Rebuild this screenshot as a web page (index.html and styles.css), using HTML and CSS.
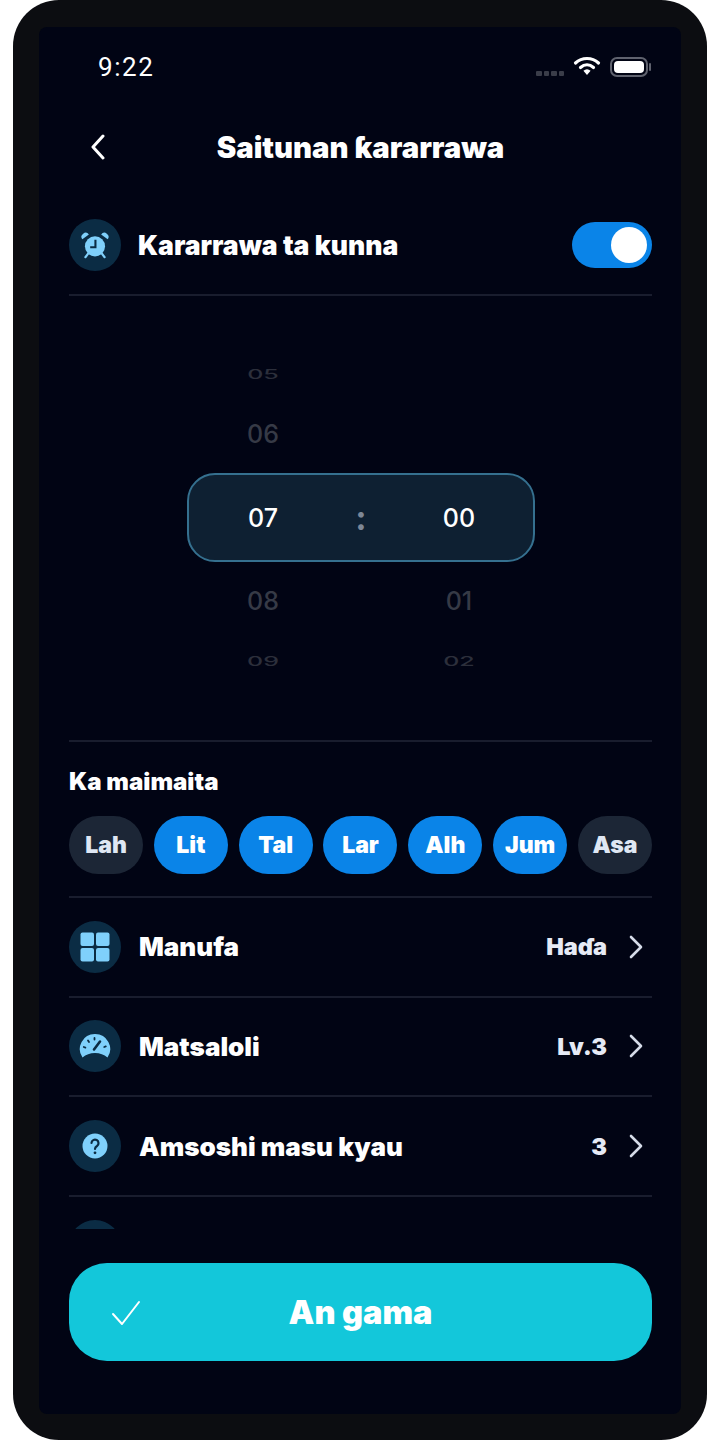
FILE: index.html
```html
<!DOCTYPE html>
<html lang="ha">
<head>
    <meta charset="UTF-8">
    <meta name="viewport" content="width=device-width, initial-scale=1.0">
    <title>Saitunan ƙararrawa</title>
    <link rel="stylesheet" href="styles.css">
</head>
<body>
    <div class="phone">
        <div class="screen">
            <!-- Status bar -->
            <div class="status-bar">
                <span class="status-time">9:22</span>
                <div class="status-icons">
                    <div class="signal"><i></i><i></i><i></i><i></i></div>
                    <svg class="wifi" width="28" height="22" viewBox="0 0 28 22" fill="none" stroke="#fff" stroke-width="3.2" stroke-linecap="round">
                        <path d="M2.5 8C9 2 19 2 25.500 8"/>
                        <path d="M7.500 12.500C11.500 9 16.500 9 20.500 12.500"/>
                        <path d="M14 20l-3.600-4.200a5.500 5.500 0 0 1 7.200 0z" fill="#fff" stroke="none"/>
                    </svg>
                    <div class="battery"><div class="battery-fill"></div></div>
                </div>
            </div>

            <!-- Header -->
            <header class="header">
                <svg class="back" width="16" height="26" viewBox="0 0 16 26" fill="none" stroke="#fff" stroke-width="3" stroke-linecap="round" stroke-linejoin="round">
                    <path d="M13 2L3 13l10 11"/>
                </svg>
                <h1>Saitunan ƙararrawa</h1>
            </header>

            <main class="content">
                <div class="alarm-row">
                    <div class="icon-circle">
                        <svg width="28" height="28" viewBox="0 0 32 32" fill="#7fd0fb">
                            <circle cx="16" cy="17.500" r="11.500"/>
                            <path d="M1.500 9.500a4.500 4.500 0 0 1 7.500-5.500z"/>
                            <path d="M30.500 9.500a4.500 4.500 0 0 0-7.500-5.500z"/>
                            <path d="M8 26l-3 4M24 26l3 4" stroke="#7fd0fb" stroke-width="2.400" stroke-linecap="round"/>
                            <path d="M16.500 10v8.500H10.500" fill="none" stroke="#0b2c44" stroke-width="2.400"/>
                        </svg>
                    </div>
                    <span class="row-title alarm-title">Kararrawa ta kunna</span>
                    <div class="toggle"><div class="toggle-knob"></div></div>
                </div>

                <!-- Time wheel -->
                <div class="picker">
                    <div class="wheel-row far"><span>05</span><span></span><span></span></div>
                    <div class="wheel-row near"><span>06</span><span></span><span></span></div>
                    <div class="wheel-row selected"><span>07</span><span class="colon">:</span><span>00</span></div>
                    <div class="wheel-row near"><span>08</span><span></span><span>01</span></div>
                    <div class="wheel-row far"><span>09</span><span></span><span>02</span></div>
                </div>

                <!-- Repeat days -->
                <section class="repeat">
                    <h2>Ka maimaita</h2>
                    <div class="days">
                        <span class="day">Lah</span>
                        <span class="day active">Lit</span>
                        <span class="day active">Tal</span>
                        <span class="day active">Lar</span>
                        <span class="day active">Alh</span>
                        <span class="day active">Jum</span>
                        <span class="day">Asa</span>
                    </div>
                </section>

                <!-- Settings list -->
                <div class="settings-row">
                    <div class="icon-circle">
                        <svg width="30" height="30" viewBox="0 0 30 30" fill="#7fd0fb">
                            <rect x="0.500" y="0.500" width="13.500" height="13.500" rx="2"/>
                            <rect x="16" y="0.500" width="13.500" height="13.500" rx="2"/>
                            <rect x="0.500" y="16" width="13.500" height="13.500" rx="2"/>
                            <rect x="16" y="16" width="13.500" height="13.500" rx="2"/>
                        </svg>
                    </div>
                    <span class="row-title">Manufa</span>
                    <span class="row-value">Haɗa</span>
                    <svg class="chevron" width="14" height="24" viewBox="0 0 14 24" fill="none" stroke="#d5dbe8" stroke-width="2.600" stroke-linecap="round" stroke-linejoin="round"><path d="M2 2l10 10L2 22"/></svg>
                </div>
                <div class="settings-row">
                    <div class="icon-circle">
                        <svg class="gauge" width="32" height="28" viewBox="0 0 32 28" fill="#7fd0fb">
                            <path d="M16 1A15 15 0 0 0 3.500 24.500C7 21.500 11 20 16 20s9 1.500 12.500 4.500A15 15 0 0 0 16 1z"/>
                            <path d="M15 16.500L21 8.500" stroke="#0b2c44" stroke-width="2.600" stroke-linecap="round"/>
                            <path d="M15.500 5v1.500M9 7.500l1 1.500M4.800 14l1.600 .6M25.200 14l1.600-.6" stroke="#0b2c44" stroke-width="1.800" stroke-linecap="round"/>
                        </svg>
                    </div>
                    <span class="row-title">Matsaloli</span>
                    <span class="row-value">Lv.3</span>
                    <svg class="chevron" width="14" height="24" viewBox="0 0 14 24" fill="none" stroke="#d5dbe8" stroke-width="2.600" stroke-linecap="round" stroke-linejoin="round"><path d="M2 2l10 10L2 22"/></svg>
                </div>
                <div class="settings-row">
                    <div class="icon-circle">
                        <svg width="26" height="26" viewBox="0 0 26 26">
                            <circle cx="13" cy="13" r="12.500" fill="#7fd0fb"/>
                            <path d="M9.500 10a3.500 3.500 0 1 1 5.500 3c-1.300.8-2 1.500-2 3" fill="none" stroke="#0b2c44" stroke-width="2.200" stroke-linecap="round"/>
                            <circle cx="13" cy="19.800" r="1.400" fill="#0b2c44"/>
                        </svg>
                    </div>
                    <span class="row-title">Amsoshi masu kyau</span>
                    <span class="row-value">3</span>
                    <svg class="chevron" width="14" height="24" viewBox="0 0 14 24" fill="none" stroke="#d5dbe8" stroke-width="2.600" stroke-linecap="round" stroke-linejoin="round"><path d="M2 2l10 10L2 22"/></svg>
                </div>
                <div class="settings-row">
                    <div class="icon-circle"></div>
                </div>
            </main>

            <!-- Confirm -->
            <button type="button" class="confirm-btn">
                <svg class="confirm-check" width="30" height="26" viewBox="0 0 30 26" fill="none" stroke="#fff" stroke-width="2" stroke-linecap="round" stroke-linejoin="round">
                    <path d="M2 14l9 10L28 2"/>
                </svg>
                An gama
            </button>
        </div>
    </div>
</body>
</html>
```

FILE: styles.css
```css
/* Global Styles */
* {
    box-sizing: border-box;
}

body {
    margin: 0;
    padding: 0;
    background: #fff;
    font-family: Inter, "Noto Sans", sans-serif;
    color: #fff;
}

/* Device frame */
.phone {
    width: 694px;
    height: 1440px;
    margin-left: 13px;
    padding: 27px 26px 26px;
    background: #0c0d11;
    border-radius: 46px;
}

.screen {
    height: 100%;
    padding: 0 29px 53px 30px;
    display: flex;
    flex-direction: column;
    background: #010414;
    border-radius: 8px;
}

/* Status bar */
.status-bar {
    height: 80px;
    flex: none;
    padding: 0 4px 0 29px;
    display: flex;
    align-items: center;
    justify-content: space-between;
}

.status-time {
    font-family: Roboto, sans-serif;
    font-size: 26px;
    letter-spacing: 1.600px;
}

.status-icons {
    display: flex;
    align-items: center;
}

.signal {
    display: flex;
    gap: 2px;
    margin: 12px 9px 0 0;
}

.signal i {
    width: 5.500px;
    height: 5px;
    background: #3a3d49;
    border-radius: 1px;
}

.wifi {
    margin-bottom: 2px;
}

.battery {
    position: relative;
    width: 38px;
    height: 20px;
    margin-left: 9px;
    padding: 2px;
    border: 2px solid #5f626e;
    border-radius: 7px;
}

.battery::after {
    content: "";
    position: absolute;
    right: -5px;
    top: 4px;
    width: 2px;
    height: 8px;
    background: #5f626e;
    border-radius: 1px;
}

.battery-fill {
    height: 100%;
    background: #fff;
    border-radius: 4px;
}

/* Header */
.header {
    position: relative;
    height: 80px;
    flex: none;
    display: flex;
    align-items: center;
    justify-content: center;
}

.header h1 {
    margin: 0;
    font-size: 29.300px;
    font-weight: 900;
}

.back {
    position: absolute;
    left: 21px;
    top: 27px;
}

/* Main scroll area */
.content {
    flex: 1;
    min-height: 0;
    overflow: hidden;
}

.alarm-row {
    height: 109px;
    padding: 32px 0 24px;
    display: flex;
    align-items: center;
    border-bottom: 2px solid #191d2e;
}

.icon-circle {
    width: 52px;
    height: 52px;
    flex: none;
    margin-right: 18px;
    display: flex;
    align-items: center;
    justify-content: center;
    background: #0b2c44;
    border-radius: 50%;
}

.gauge {
    margin-top: 2px;
}

.row-title {
    flex: 1;
    font-size: 26px;
    font-weight: 900;
}

.alarm-title {
    margin-left: -1px;
    font-size: 26.500px;
}

.toggle {
    width: 80px;
    height: 46px;
    padding: 5px;
    display: flex;
    justify-content: flex-end;
    background: #0a84e8;
    border-radius: 23px;
}

.toggle-knob {
    width: 36px;
    height: 36px;
    background: #fff;
    border-radius: 50%;
}

/* Time wheel */
.picker {
    height: 444px;
    margin-left: 119px;
    width: 346px;
    padding-top: 58px;
    display: grid;
    grid-template-rows: 40px 60px 87px 60px 40px;
    row-gap: 10px;
}

.wheel-row {
    padding: 0 26px;
    display: grid;
    grid-template-columns: repeat(3, 1fr);
    align-items: center;
    text-align: center;
    font-size: 25px;
    font-weight: 500;
}

.wheel-row.near {
    color: #363a46;
}

.wheel-row.far {
    color: #2c2f3b;
}

.wheel-row.far span {
    display: block;
    transform: scaleY(0.55);
}

.wheel-row.selected {
    margin: -1px;
    padding: 1px 25px 0;
    background: #0e2032;
    border: 2px solid #35708f;
    border-radius: 28px;
}

.colon {
    font-size: 34px;
    font-weight: 700;
    line-height: 34px;
    color: #7d8796;
}

/* Repeat days */
.repeat {
    height: 158px;
    padding-top: 26px;
    border-top: 2px solid #191d2e;
    border-bottom: 2px solid #191d2e;
}

.repeat h2 {
    margin: 0 0 20px;
    font-size: 24px;
    font-weight: 900;
    line-height: 28px;
}

.days {
    display: flex;
    justify-content: space-between;
}

.day {
    width: 74px;
    height: 58px;
    display: flex;
    align-items: center;
    justify-content: center;
    background: #1c2636;
    border-radius: 29px;
    color: #dfe7f3;
    font-size: 23px;
    font-weight: 900;
}

.day.active {
    background: #0a84e8;
    color: #fff;
}

/* Settings rows */
.settings-row {
    height: 99.670px;
    display: flex;
    align-items: center;
    border-bottom: 2px solid #191d2e;
}

.row-value {
    margin-right: 22px;
    font-size: 23.500px;
    font-weight: 900;
    color: #e6eaf5;
}

.chevron {
    margin-right: 9px;
}

/* Confirm button */
.confirm-btn {
    position: relative;
    flex: none;
    width: 100%;
    height: 98px;
    margin-top: 34px;
    background: #13c7da;
    border: none;
    border-radius: 38px;
    color: #fff;
    font-family: Inter, sans-serif;
    font-size: 32.500px;
    font-weight: 900;
}

.confirm-check {
    position: absolute;
    left: 42px;
    top: 37px;
}
```
